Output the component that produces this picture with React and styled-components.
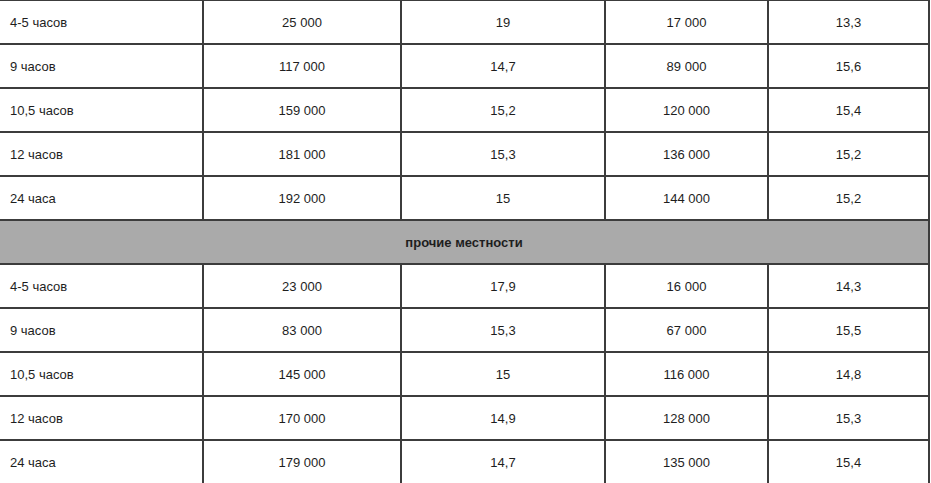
import React from "react";
import styled, { createGlobalStyle } from "styled-components";

const GlobalStyle = createGlobalStyle`
  body {
    margin: 0;
    background: #fff;
    font-family: "Liberation Sans", Arial, sans-serif;
    overflow: hidden;
  }
`;

const Wrap = styled.div`
  width: 931px;
  overflow: hidden;
`;

const Table = styled.table`
  margin-left: -2px;
  margin-top: -1px;
  width: 932px;
  table-layout: fixed;
  border-collapse: separate;
  border-spacing: 0;
  border-top: 2px solid #3c3c3c;
  border-left: 2px solid #3c3c3c;
  font-size: 13px;
  color: #1e1e1e;
`;

const Cell = styled.td`
  box-sizing: border-box;
  height: 44px;
  padding: 0 10px;
  border-right: 2px solid #3c3c3c;
  border-bottom: 2px solid #3c3c3c;
  vertical-align: middle;
  text-align: ${(p) => (p.$left ? "left" : "center")};
  white-space: nowrap;
`;

const GroupCell = styled(Cell)`
  background: #aaaaaa;
  font-weight: bold;
  text-align: center;
`;

const widths = [204, 198, 204, 163, 161];

const firstGroup = [
  ["4-5 часов", "25 000", "19", "17 000", "13,3"],
  ["9 часов", "117 000", "14,7", "89 000", "15,6"],
  ["10,5 часов", "159 000", "15,2", "120 000", "15,4"],
  ["12 часов", "181 000", "15,3", "136 000", "15,2"],
  ["24 часа", "192 000", "15", "144 000", "15,2"],
];

const otherPlaces = [
  ["4-5 часов", "23 000", "17,9", "16 000", "14,3"],
  ["9 часов", "83 000", "15,3", "67 000", "15,5"],
  ["10,5 часов", "145 000", "15", "116 000", "14,8"],
  ["12 часов", "170 000", "14,9", "128 000", "15,3"],
  ["24 часа", "179 000", "14,7", "135 000", "15,4"],
];

function Row({ cells }) {
  return (
    <tr>
      {cells.map((c, i) => (
        <Cell key={i} $left={i === 0}>
          {c}
        </Cell>
      ))}
    </tr>
  );
}

export default function App() {
  return (
    <Wrap>
      <GlobalStyle />
      <Table>
        <colgroup>
          {widths.map((w, i) => (
            <col key={i} style={{ width: w }} />
          ))}
        </colgroup>
        <tbody>
          {firstGroup.map((r, i) => (
            <Row key={"a" + i} cells={r} />
          ))}
          <tr>
            <GroupCell colSpan={5}>прочие местности</GroupCell>
          </tr>
          {otherPlaces.map((r, i) => (
            <Row key={"b" + i} cells={r} />
          ))}
        </tbody>
      </Table>
    </Wrap>
  );
}
